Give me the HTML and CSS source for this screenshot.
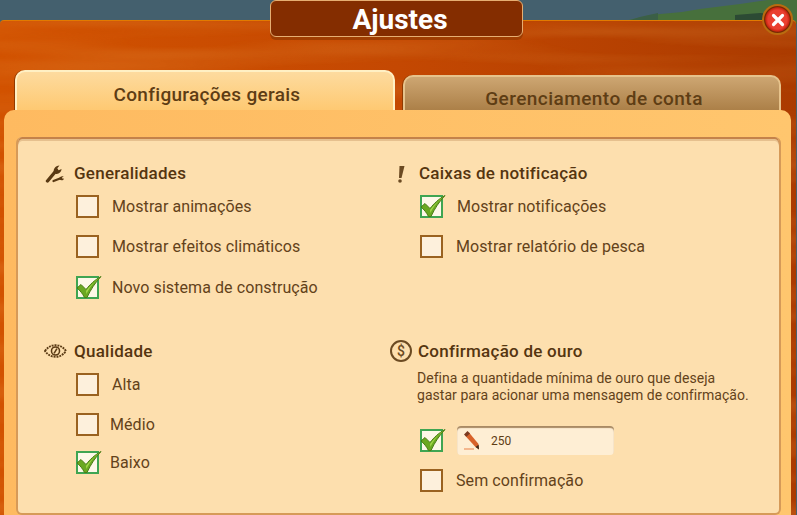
FILE: index.html
```html
<!DOCTYPE html>
<html lang="pt">
<head>
  <meta charset="UTF-8">
  <meta name="viewport" content="width=device-width, initial-scale=1.0">
  <title>Ajustes</title>
  <link rel="stylesheet" href="styles.css">
</head>
<body>
  <div class="scene">
    <svg class="hills" width="797" height="24" viewBox="0 0 797 24">
      <path d="M612 24 L650 15 L682 12 L700 9 L740 4 L768 0 L797 0 L797 24 Z" fill="#47703c"/>
      <path d="M618 24 L640 17 L658 13 L658 24 Z" fill="#3b5f46"/>
      <path d="M735 15 L760 13 L775 14 L775 24 L735 24 Z" fill="#2c4a34"/>
    </svg>

    <div class="board">
      <svg class="grain" width="797" height="495">
        <filter id="wood" x="0" y="0" width="100%" height="100%">
          <feTurbulence type="fractalNoise" baseFrequency="0.003 0.05" numOctaves="2" seed="7"/>
          <feColorMatrix type="matrix" values="0 0 0 0 0.85  0 0 0 0 0.38  0 0 0 0 0.08  1.6 0 0 0 -0.62"/>
        </filter>
        <rect width="797" height="495" filter="url(#wood)"/>
      </svg>

      <div class="tabs">
        <div class="tab tab-active">Configurações gerais</div>
        <div class="tab tab-idle">Gerenciamento de conta</div>
      </div>

      <div class="panel">
        <div class="inner">
          <section class="group">
            <h2 class="heading">
              <span class="heading-icon">
                <svg width="20" height="20" viewBox="0 0 20 20">
                  <path d="M3.5 18 L11 9" stroke="#5a3a14" stroke-width="3.4" stroke-linecap="round"/>
                  <path d="M10 9.5 C9 6 11 3 15.5 2.5 L13.3 5.3 L14.6 7.3 L17.6 6.1 C17.4 9.9 14 11.5 11.5 10.7 Z" fill="#5a3a14"/>
                  <path d="M9.5 18.1 L16 15.5" stroke="#5a3a14" stroke-width="2.2" stroke-linecap="round"/>
                  <path d="M15 16.1 C15.4 13.7 17.4 12.7 19.8 13.3 L18 14.5 L18.6 15.7 L20 15.5 C19.8 17.5 17 18.1 15 16.1 Z" fill="#5a3a14"/>
                </svg>
              </span>
              Generalidades
            </h2>
            <div class="options">
              <div class="option"><span class="box"></span>Mostrar animações</div>
              <div class="option"><span class="box"></span>Mostrar efeitos climáticos</div>
              <div class="option option-wide">
                <span class="box box-on">
                  <svg class="tick" width="26" height="24" viewBox="0 0 26 24"><path d="M1 13 L5 9.5 L10 14.5 C14 9.5 18 5.5 25 1.5 C19 8 15 14 11 22.5 L8.5 22.5 C6.5 18.5 4 15.5 1 13 Z" fill="#6aa821" stroke="#4a7d16" stroke-width="1"/><path d="M10 16 C14 11 18 6.5 24 2.5 C18 7 14 11.5 10.5 19 Z" fill="#a3d84a"/></svg>
                </span>
                Novo sistema de construção
              </div>
            </div>
          </section>

          <section class="group group-right">
            <h2 class="heading">
              <span class="heading-icon">
                <svg width="20" height="20" viewBox="0 0 20 20">
                  <path d="M9.5 3 L14.5 3 L11.5 15 L9 15 Z" fill="#6b4a22"/>
                  <circle cx="10" cy="18" r="1.8" fill="#6b4a22"/>
                </svg>
              </span>
              Caixas de notificação
            </h2>
            <div class="options">
              <div class="option option-far">
                <span class="box box-on">
                  <svg class="tick" width="26" height="24" viewBox="0 0 26 24"><path d="M1 13 L5 9.5 L10 14.5 C14 9.5 18 5.5 25 1.5 C19 8 15 14 11 22.5 L8.5 22.5 C6.5 18.5 4 15.5 1 13 Z" fill="#6aa821" stroke="#4a7d16" stroke-width="1"/><path d="M10 16 C14 11 18 6.5 24 2.5 C18 7 14 11.5 10.5 19 Z" fill="#a3d84a"/></svg>
                </span>
                Mostrar notificações
              </div>
              <div class="option"><span class="box"></span>Mostrar relatório de pesca</div>
            </div>
          </section>

          <section class="group">
            <h2 class="heading">
              <span class="heading-icon">
                <svg width="23" height="14" viewBox="0 0 24 14" fill="none" stroke="#5a3a14">
                  <path d="M1 7 C5 2 8 1 12 1 C16 1 19 2 23 7 C19 12 16 13 12 13 C8 13 5 12 1 7 Z" stroke-width="2" stroke-dasharray="2 1"/>
                  <circle cx="12" cy="7" r="4.2" stroke-width="1.6"/>
                  <path d="M10.5 9.5 L13.5 4.5" stroke-width="1.6"/>
                </svg>
              </span>
              Qualidade
            </h2>
            <div class="options">
              <div class="option"><span class="box"></span>Alta</div>
              <div class="option option-near"><span class="box"></span>Médio</div>
              <div class="option option-near option-tight">
                <span class="box box-on">
                  <svg class="tick" width="26" height="24" viewBox="0 0 26 24"><path d="M1 13 L5 9.5 L10 14.5 C14 9.5 18 5.5 25 1.5 C19 8 15 14 11 22.5 L8.5 22.5 C6.5 18.5 4 15.5 1 13 Z" fill="#6aa821" stroke="#4a7d16" stroke-width="1"/><path d="M10 16 C14 11 18 6.5 24 2.5 C18 7 14 11.5 10.5 19 Z" fill="#a3d84a"/></svg>
                </span>
                Baixo
              </div>
            </div>
          </section>

          <section class="group group-right group-gold">
            <h2 class="heading">
              <span class="heading-icon"><span class="coin">$</span></span>
              Confirmação de ouro
            </h2>
            <p class="hint">Defina a quantidade mínima de ouro que deseja<br>gastar para acionar uma mensagem de confirmação.</p>
            <div class="amount-row">
              <span class="box box-on">
                <svg class="tick" width="26" height="24" viewBox="0 0 26 24"><path d="M1 13 L5 9.5 L10 14.5 C14 9.5 18 5.5 25 1.5 C19 8 15 14 11 22.5 L8.5 22.5 C6.5 18.5 4 15.5 1 13 Z" fill="#6aa821" stroke="#4a7d16" stroke-width="1"/><path d="M10 16 C14 11 18 6.5 24 2.5 C18 7 14 11.5 10.5 19 Z" fill="#a3d84a"/></svg>
              </span>
              <div class="amount">
                <svg width="16" height="19" viewBox="0 0 16 19">
                  <path d="M0 18 L10 18" stroke="#f0a070" stroke-width="1.4"/>
                  <path d="M1 4.5 L11 15.5 L15 18.5 L14.5 13 L5 1.5 Z" fill="#d8622a"/>
                  <path d="M0 3.5 L3.5 0 L6 2.4 L2.4 5.8 Z" fill="#7a3a20"/>
                  <path d="M11.5 16 L15 18.5 L14.6 13.8 Z" fill="#3e2a1a"/>
                </svg>
                <span class="amount-value">250</span>
              </div>
            </div>
            <div class="option option-last"><span class="box"></span>Sem confirmação</div>
          </section>
        </div>
      </div>
    </div>

    <div class="title-plate">Ajustes</div>

    <button class="close" type="button" aria-label="Fechar">
      <svg width="14" height="14" viewBox="0 0 14 14"><path d="M2.5 2.5 L11.5 11.5 M11.5 2.5 L2.5 11.5" stroke="#fff" stroke-width="3.2" stroke-linecap="round"/></svg>
    </button>
  </div>
</body>
</html>
```

FILE: styles.css
```css
* {
  box-sizing: border-box;
}
body {
  margin: 0;
  font-family: Roboto, "Liberation Sans", sans-serif;
  color: #5e3d14;
}
.scene {
  position: relative;
  width: 797px;
  height: 515px;
  padding-top: 20px;
  overflow: hidden;
  background: #44606e;
}
.hills {
  position: absolute;
  top: 0;
  left: 0;
}

/* wood board */
.board {
  position: relative;
  width: 796px;
  height: 495px;
  padding-top: 50px;
  border-top: 1px solid #e27a00;
  border-radius: 4px 4px 0 0;
  background: linear-gradient(90deg, #d25200 0%, #c44802 50%, #ab3b00 100%);
  overflow: hidden;
}
.grain {
  position: absolute;
  top: 0;
  left: 0;
  opacity: 0.3;
}

/* tabs */
.tabs {
  position: relative;
  display: flex;
  align-items: flex-end;
  padding-left: 15px;
  margin-top: -1px;
}
.tab {
  padding-left: 4px;
  text-align: center;
  font-size: 19px;
  font-weight: 500;
  border-radius: 10px 10px 0 0;
}
.tab-active {
  width: 380px;
  height: 40px;
  padding-top: 11px;
  border: 2px solid #fff0c4;
  border-bottom: 0;
  letter-spacing: 0.3px;
  background: linear-gradient(#fddb9f, #fec972);
  box-shadow: -1px 0 0 #8f3a00;
}
.tab-idle {
  width: 378px;
  height: 35px;
  margin-left: 8px;
  padding-top: 10px;
  border: 2px solid #e6c38c;
  border-bottom: 0;
  letter-spacing: 0.45px;
  background: linear-gradient(#cda672, #ac8048);
  box-shadow: -1px 0 0 #8f3a00;
}

/* panel */
.panel {
  position: relative;
  width: 787px;
  height: 420px;
  margin-left: 4px;
  padding: 27px 10px 0 12px;
  border-radius: 10px 10px 0 0;
  background: linear-gradient(90deg, #feba60, #ffc66e);
}
.inner {
  display: grid;
  grid-template-columns: 346px 1fr;
  grid-template-rows: 178px auto;
  height: 378px;
  padding: 24px 0 0 26px;
  border: 2px solid #d69a58;
  border-top: 0;
  border-radius: 6px;
  background: #fddfae;
  box-shadow: inset 0 2px 0 #c4824a, inset 0 4px 0 #e6c08e;
}

/* sections */
.heading {
  display: flex;
  align-items: center;
  height: 24px;
  margin: 0;
  font-size: 17px;
  font-weight: 500;
  letter-spacing: 0.25px;
  color: #553510;
}
.heading-icon {
  display: flex;
  align-items: center;
  flex: none;
  width: 30px;
}
.group-right .heading-icon {
  width: 29px;
}
.group-gold .heading-icon {
  width: 28px;
}
.coin {
  display: block;
  width: 22px;
  height: 22px;
  border: 2px solid #6b4a22;
  border-radius: 50%;
  text-align: center;
  font-size: 14px;
  line-height: 18px;
  color: #6b4a22;
}
.options {
  display: flex;
  flex-direction: column;
  gap: 17px;
  margin-top: 10px;
  padding-left: 32px;
}
.group-right .options {
  padding-left: 30px;
}
.option {
  display: flex;
  align-items: center;
  gap: 13px;
  height: 23px;
  font-size: 16px;
  letter-spacing: 0.08px;
  color: #63421a;
}
.option-wide {
  margin-top: 1px;
}
.option-near {
  gap: 11px;
}
.option-far {
  gap: 14px;
}
.option-tight {
  margin-top: -2px;
}
.option-last {
  margin: 14px 0 0 30px;
}

/* checkboxes */
.box {
  position: relative;
  flex: none;
  width: 23px;
  height: 23px;
  border: 2px solid #9a6220;
  background: #fdf0dc;
}
.box-on {
  border-color: #3fa552;
  background: #fdf8e8;
}
.tick {
  position: absolute;
  top: -3px;
  left: -2px;
}

/* gold */
.hint {
  margin: 7px 0 0 27px;
  font-size: 14px;
  line-height: 17px;
  letter-spacing: 0.04px;
  color: #63421a;
}
.amount-row {
  display: flex;
  align-items: center;
  gap: 14px;
  margin: 22px 0 0 30px;
}
.amount {
  display: flex;
  align-items: center;
  width: 157px;
  height: 29px;
  padding-left: 7px;
  border-radius: 4px;
  background: #feeed4;
  box-shadow: inset 0 2px 1px #a98a64;
}
.amount-value {
  margin-left: 11px;
  font-size: 12px;
  color: #5e3d14;
}

/* title and close */
.title-plate {
  position: absolute;
  top: 0;
  left: 270px;
  width: 253px;
  height: 37px;
  padding-left: 7px;
  border: 1px solid #e6ae72;
  border-radius: 6px;
  background: #842d00;
  box-shadow: 0 3px 0 #a03e02;
  text-align: center;
  font-size: 28px;
  font-weight: 700;
  line-height: 37px;
  color: #fff;
}
.close {
  position: absolute;
  top: 4px;
  left: 762px;
  display: flex;
  align-items: center;
  justify-content: center;
  width: 31px;
  height: 31px;
  padding: 0;
  border: 2px solid #b96c10;
  border-radius: 50%;
  background: radial-gradient(circle at 50% 50%, #ea4030 0 50%, #c82410 62%, #7a2a04 66%);
}
```
